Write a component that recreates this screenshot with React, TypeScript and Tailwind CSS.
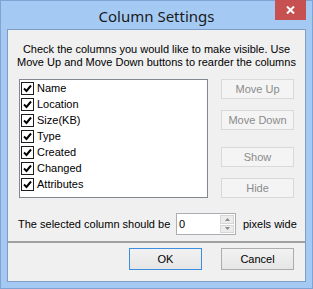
import React from "react";

const items = ["Name", "Location", "Size(KB)", "Type", "Created", "Changed", "Attributes"];

function Check() {
  return (
    <div className="w-[13px] h-[13px] border border-[#1c1c1c] bg-white flex items-center justify-center">
      <svg width="9" height="9" viewBox="0 0 9 9">
        <path d="M1 4.5 L3.5 7 L8 1.5" stroke="#000" strokeWidth="2" fill="none" />
      </svg>
    </div>
  );
}

function DisabledBtn({ label }: { label: string }) {
  return (
    <div className="w-[73px] h-[20px] border border-[#d9d9d9] bg-[#f4f4f4] flex items-center justify-center text-[#8b8b8b]">
      {label}
    </div>
  );
}

export default function App() {
  return (
    <div
      className="relative w-[313px] h-[289px] bg-[#a4caf4] border border-[#7fa3d3] flex flex-col text-[11px] text-black"
      style={{ fontFamily: '"Liberation Sans", Arial, sans-serif' }}
    >
      <div className="h-[28px] flex items-center justify-center text-[15px] text-[#1a1a1a] pt-[2px]" style={{ fontFamily: '"Noto Sans", "Open Sans", sans-serif' }}>
        Column Settings
      </div>
      <div className="absolute top-[-1px] left-[274px] w-[31px] h-[20px] bg-[#c75050] flex items-center justify-center">
        <svg width="9" height="8" viewBox="0 0 9 8">
          <path d="M1 0.5 L8 7.5 M8 0.5 L1 7.5" stroke="#fff" strokeWidth="2" />
        </svg>
      </div>
      <div className="mx-[6px] h-[253px] border border-[#7f9ec6] bg-[#f0f0f0] flex flex-col">
        <div className="mt-[13px] text-center leading-[13px]">
          <div>Check the columns you would like to make visible. Use</div>
          <div>Move Up and Move Down buttons to rearder the columns</div>
        </div>
        <div className="mt-[10px] pl-[11px] flex">
          <div className="w-[189px] h-[119px] border border-[#828790] bg-white flex flex-col">
            {items.map((it) => (
              <div key={it} className="h-[16px] flex items-center pl-[1px]">
                <Check />
                <span className="ml-[3px] leading-[16px]">{it}</span>
              </div>
            ))}
          </div>
          <div className="ml-[13px] flex flex-col">
            <DisabledBtn label="Move Up" />
            <div className="mt-[11px]"><DisabledBtn label="Move Down" /></div>
            <div className="mt-[17px]"><DisabledBtn label="Show" /></div>
            <div className="mt-[11px]"><DisabledBtn label="Hide" /></div>
          </div>
        </div>
        <div className="mt-[15px] pl-[10px] flex items-center">
          <span className="w-[158px]">The selected column should be</span>
          <div className="w-[60px] h-[22px] border border-[#abadb3] bg-white flex items-stretch">
            <div className="flex-1 pl-[2px] flex items-center">0</div>
            <div className="w-[15px] flex flex-col py-[1px] pr-[1px] gap-[1px]">
              <div className="flex-1 bg-[#ececec] border border-[#d6d6d6] flex items-center justify-center">
                <svg width="5" height="3" viewBox="0 0 5 3"><path d="M2.5 0 L5 3 L0 3 Z" fill="#8a8a8a" /></svg>
              </div>
              <div className="flex-1 bg-[#ececec] border border-[#d6d6d6] flex items-center justify-center">
                <svg width="5" height="3" viewBox="0 0 5 3"><path d="M0 0 L5 0 L2.5 3 Z" fill="#8a8a8a" /></svg>
              </div>
            </div>
          </div>
          <span className="ml-[7px]">pixels wide</span>
        </div>
        <div className="mt-[6px] h-[2px] bg-[#a0a0a0]" />
        <div className="mt-[5px] flex justify-end pr-[11px] gap-[19px]">
          <div className="w-[73px] h-[22px] border border-[#3c8fe0] bg-gradient-to-b from-[#f2f2f2] to-[#e6e6e6] flex items-center justify-center">
            OK
          </div>
          <div className="w-[73px] h-[22px] border border-[#acacac] bg-gradient-to-b from-[#f2f2f2] to-[#e6e6e6] flex items-center justify-center">
            Cancel
          </div>
        </div>
      </div>
    </div>
  );
}
